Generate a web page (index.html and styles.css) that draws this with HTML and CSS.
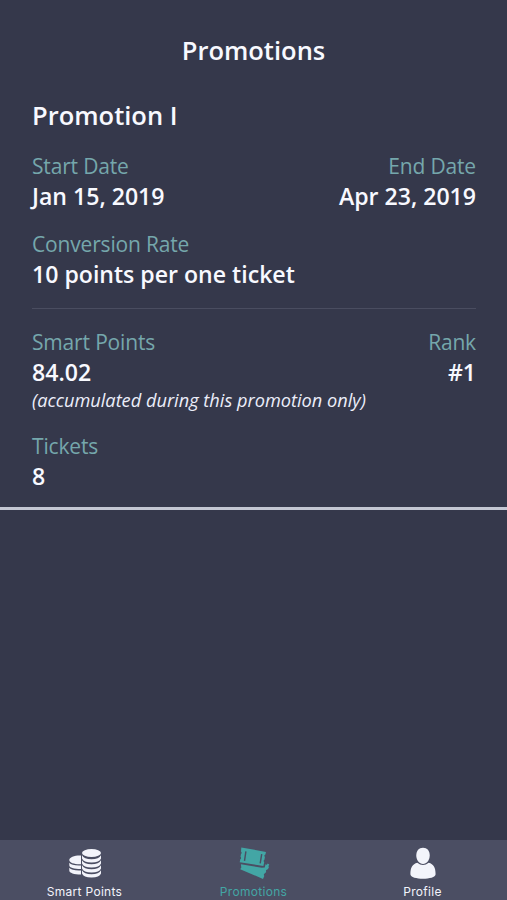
FILE: index.html
```html
<!DOCTYPE html>
<html lang="en">
<head>
<meta charset="utf-8">
<title>Promotions</title>
<link rel="stylesheet" href="styles.css">
</head>
<body>
<div class="app">
  <header class="header"><h1>Promotions</h1></header>
  <main class="promotion">
    <h2 class="name">Promotion I</h2>
    <div class="row">
      <div class="field"><span class="label">Start Date</span><span class="value">Jan 15, 2019</span></div>
      <div class="field end"><span class="label">End Date</span><span class="value">Apr 23, 2019</span></div>
    </div>
    <div class="row">
      <div class="field"><span class="label">Conversion Rate</span><span class="value">10 points per one ticket</span></div>
    </div>
    <hr class="divider">
    <div class="row points">
      <div class="field"><span class="label">Smart Points</span><span class="value">84.02</span><em class="note">(accumulated during this promotion only)</em></div>
      <div class="field end"><span class="label">Rank</span><span class="value">#1</span></div>
    </div>
    <div class="row">
      <div class="field"><span class="label">Tickets</span><span class="value">8</span></div>
    </div>
  </main>
  <nav class="tabs">
    <a class="tab">
      <svg class="icon" viewBox="0 0 34 32" fill="currentColor">
        <ellipse cx="23.5" cy="6" rx="9.5" ry="4"/>
        <path d="M14 8.200q2 4 9.500 4t9.500-4v3.400q-1.500 4-9.500 4t-9.500-4zM14 13.200q2 4 9.500 4t9.500-4v3.400q-1.500 4-9.500 4t-9.500-4zM14 18.200q2 4 9.500 4t9.500-4v3.400q-1.500 4-9.500 4t-9.500-4zM14 23.200q2 4 9.500 4t9.500-4v3.400q-1.500 4-9.500 4t-9.500-4z"/>
        <path d="M13 8.500v8.700C7 17.500 1.300 16 1.300 13 1.300 10 7 8.200 13 8.500zM1.300 15.800q2.500 3.100 11.700 2.700v3.500C6 22 1.300 20.700 1.300 18.200zM1.300 20.800q2.500 3.100 11.700 2.700v4C6 27.500 1.300 26 1.300 23.500z"/>
      </svg>
      <span>Smart Points</span>
    </a>
    <a class="tab active">
      <svg class="icon" viewBox="0 0 34 32" fill="currentColor">
        <path fill-rule="evenodd" d="M4.300.5 29 4.900 28.400 7.500Q26.600 8.500 27.900 10L27.400 12.700Q26 13.800 27.200 15.200L26.400 19 2.700 15.200 3.300 12.300Q4.800 11 3.500 9.700L4 7.100Q5.300 5.800 4 4.500zM8.200 4.300 6.800 13.800 8.200 14 9.600 4.500zM24 7 22.500 16.200 23.900 16.400 25.400 7.200z"/>
        <path d="M3.900 17.300 24.900 20.800 27.700 20.500 28.700 17 29.800 18 30.600 16.600 32.300 17.500Q31 19.200 31.900 20.700L30.400 22.600Q28.200 22.800 29.200 25.100L27.900 26.200Q26.100 27.300 27.300 29L26 31.900 3.200 22.200 4.300 20.600z"/>
      </svg>
      <span>Promotions</span>
    </a>
    <a class="tab">
      <svg class="icon" viewBox="0 0 34 32" fill="currentColor">
        <path d="M17 .8c4.200 0 6.700 3.100 6.700 7.600 0 4.800-3 8.500-6.700 8.500s-6.700-3.700-6.700-8.500C10.300 3.900 12.800.8 17 .8z"/>
        <path d="M11.300 15.800q5.700 4.500 11.400 0c4.900 1.300 6.900 5 6.900 11.400 0 6-25.200 6-25.200 0 0-6.400 2-10.100 6.900-11.400z"/>
      </svg>
      <span>Profile</span>
    </a>
  </nav>
</div>
</body>
</html>
```
FILE: styles.css
```css
* { box-sizing: border-box; }
body {
  margin: 0;
  background: #35384b;
  color: #f8f9ff;
  font-family: "Open Sans", "Noto Sans", sans-serif;
}
.app {
  height: 900px;
  display: flex;
  flex-direction: column;
}
.header { height: 99px; text-align: center; }
h1, h2 { margin: 0; font-size: 25.5px; font-weight: 600; line-height: 32px; }
h1 { padding-top: 34px; }
.promotion {
  height: 411px;
  padding: 0 31px 0 32px;
  border-bottom: 3px solid #c4c7d3;
}
.name { margin-bottom: 20px; }
.row { display: flex; justify-content: space-between; margin-bottom: 18px; }
.field { display: flex; flex-direction: column; }
.end { align-items: flex-end; }
.label { font-size: 21px; line-height: 30px; letter-spacing: -.17px; color: #75a7ac; }
.value { font-size: 23.1px; line-height: 30px; font-weight: 600; }
.note { font-size: 18.2px; line-height: 26px; color: #eceefa; }
.divider { height: 1px; margin: 19px 0 18px; border: 0; background: #4a4d60; }
.tabs {
  display: flex;
  height: 60px;
  margin-top: auto;
  background: #4b4e63;
}
.tab {
  flex: 1;
  display: flex;
  flex-direction: column;
  align-items: center;
  padding-top: 7px;
  font: 400 12px/15px Inter, "Liberation Sans", sans-serif;
  letter-spacing: .3px;
  color: #f3f4fb;
}
.active { color: #43a6a5; }
.icon { width: 34px; height: 32px; margin-bottom: 5px; }
```
